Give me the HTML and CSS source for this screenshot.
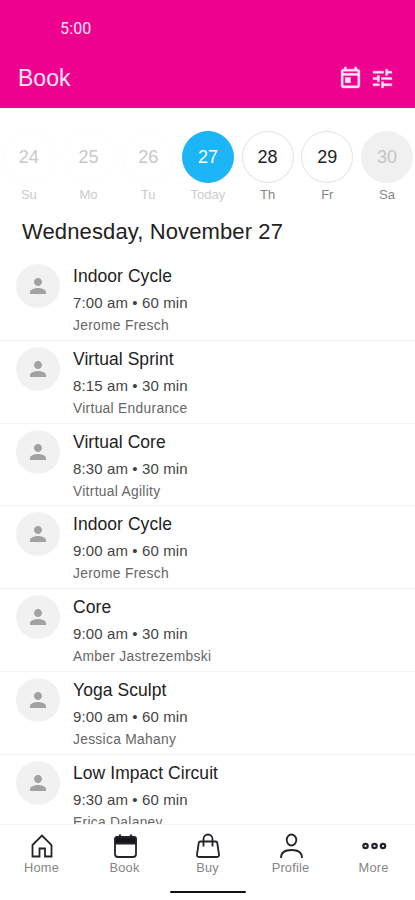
FILE: index.html
```html
<!doctype html>
<html lang="en">
<head>
  <meta charset="utf-8">
  <title>Book</title>
  <link rel="stylesheet" href="styles.css">
</head>
<body>
  <svg class="defs" width="0" height="0">
    <symbol id="person" viewBox="0 0 24 24">
      <path d="M12 12c2.21 0 4-1.79 4-4s-1.79-4-4-4-4 1.79-4 4 1.79 4 4 4zm0 2c-2.67 0-8 1.34-8 4v2h16v-2c0-2.66-5.33-4-8-4z"/>
    </symbol>
  </svg>

  <header class="header">
    <div class="clock">5:00</div>
    <div class="toolbar">
      <h1>Book</h1>
      <svg class="tool" viewBox="0 0 24 24"><path d="M19 3h-1V1h-2v2H8V1H6v2H5c-1.11 0-2 .9-2 2v14c0 1.1.89 2 2 2h14c1.1 0 2-.9 2-2V5c0-1.1-.9-2-2-2zm0 16H5V9h14v10zM5 7V5h14v2H5zm2 4h5v5H7z"/></svg>
      <svg class="tool" viewBox="0 0 24 24"><path d="M3 17v2h6v-2H3zM3 5v2h10V5H3zm10 16v-2h8v-2h-8v-2h-2v6h2zM7 9v2H3v2h4v2h2V9H7zm14 4v-2H11v2h10zm-6-4h2V7h4V5h-4V3h-2v6z"/></svg>
    </div>
  </header>

  <div class="days">
    <div class="day past"><span class="num">24</span><span class="name">Su</span></div>
    <div class="day past"><span class="num">25</span><span class="name">Mo</span></div>
    <div class="day past"><span class="num">26</span><span class="name">Tu</span></div>
    <div class="day today"><span class="num">27</span><span class="name">Today</span></div>
    <div class="day"><span class="num">28</span><span class="name">Th</span></div>
    <div class="day"><span class="num">29</span><span class="name">Fr</span></div>
    <div class="day closed"><span class="num">30</span><span class="name">Sa</span></div>
  </div>

  <h2>Wednesday, November 27</h2>

  <main class="list">
    <div class="row">
      <div class="avatar"><svg viewBox="0 0 24 24"><use href="#person"/></svg></div>
      <div class="info"><h3>Indoor Cycle</h3><p class="time">7:00 am • 60 min</p><p class="who">Jerome Fresch</p></div>
    </div>
    <div class="row">
      <div class="avatar"><svg viewBox="0 0 24 24"><use href="#person"/></svg></div>
      <div class="info"><h3>Virtual Sprint</h3><p class="time">8:15 am • 30 min</p><p class="who">Virtual Endurance</p></div>
    </div>
    <div class="row">
      <div class="avatar"><svg viewBox="0 0 24 24"><use href="#person"/></svg></div>
      <div class="info"><h3>Virtual Core</h3><p class="time">8:30 am • 30 min</p><p class="who">Vitrtual Agility</p></div>
    </div>
    <div class="row">
      <div class="avatar"><svg viewBox="0 0 24 24"><use href="#person"/></svg></div>
      <div class="info"><h3>Indoor Cycle</h3><p class="time">9:00 am • 60 min</p><p class="who">Jerome Fresch</p></div>
    </div>
    <div class="row">
      <div class="avatar"><svg viewBox="0 0 24 24"><use href="#person"/></svg></div>
      <div class="info"><h3>Core</h3><p class="time">9:00 am • 30 min</p><p class="who">Amber Jastrezembski</p></div>
    </div>
    <div class="row">
      <div class="avatar"><svg viewBox="0 0 24 24"><use href="#person"/></svg></div>
      <div class="info"><h3>Yoga Sculpt</h3><p class="time">9:00 am • 60 min</p><p class="who">Jessica Mahany</p></div>
    </div>
    <div class="row">
      <div class="avatar"><svg viewBox="0 0 24 24"><use href="#person"/></svg></div>
      <div class="info"><h3>Low Impact Circuit</h3><p class="time">9:30 am • 60 min</p><p class="who">Erica Dalaney</p></div>
    </div>
  </main>

  <nav class="tabs">
    <a class="tab">
      <svg viewBox="0 0 26 26"><path d="M3.5 12 13 2.5l9.5 9.5v11.500H16v-8h-5.500v8h-7z"/></svg>
      <span>Home</span>
    </a>
    <a class="tab">
      <svg viewBox="0 0 26 26"><rect x="3" y="4" width="21" height="20" rx="3"/><path class="solid" d="M3 10.500V6a2 2 0 0 1 2-2h17a2 2 0 0 1 2 2v4.500z"/><path class="thick" d="M8 1.500V5M19 1.500V5"/></svg>
      <span>Book</span>
    </a>
    <a class="tab">
      <svg viewBox="0 0 26 26"><path d="M5.500 8.500h15.500q1 0 1.200 1L24 21.500q.3 2.500-2.500 2.500h-17Q1.700 24 2 21.500l1.800-12q.2-1 1.700-1zM8.500 13.500V6a4.500 4.500 0 0 1 9 0v7.500"/></svg>
      <span>Buy</span>
    </a>
    <a class="tab">
      <svg viewBox="0 0 26 26"><ellipse cx="13.500" cy="7" rx="4.800" ry="5.500"/><path d="M3 25c0-5.500 3.500-8 10.500-8s10.500 2.500 10.500 8"/></svg>
      <span>Profile</span>
    </a>
    <a class="tab">
      <svg viewBox="0 0 26 26"><circle class="thick" cx="4.500" cy="13" r="2.200"/><circle class="thick" cx="13.500" cy="13" r="2.200"/><circle class="thick" cx="22" cy="13" r="2.200"/></svg>
      <span>More</span>
    </a>
  </nav>
  <div class="homebar"></div>
</body>
</html>
```
FILE: styles.css
```css
*{
  box-sizing: border-box;
}
body{
  margin: 0;
  height: 900px;
  display: flex;
  flex-direction: column;
  overflow: hidden;
  background: #fff;
  color: #222;
  font-family: "Liberation Sans", Arial, sans-serif;
}
h1, h2, h3, p{
  margin: 0;
  font-weight: normal;
}
.defs{
  display: none;
}
.header{
  height: 108px;
  flex: none;
  padding-top: 19px;
  background: #ef018f;
  color: #ffe6f5;
}
.clock{
  padding-left: 60px;
  font: 16px/20px Roboto, sans-serif;
  letter-spacing: 0.15px;
}
.toolbar{
  display: flex;
  align-items: center;
  height: 30px;
  margin-top: 24px;
  padding: 0 20px 0 18px;
}
.toolbar h1{
  flex: 1;
  font-size: 23px;
}
.tool{
  width: 25px;
  height: 25px;
  margin-left: 7px;
  fill: #ffe6f5;
  stroke: #ffe6f5;
  stroke-width: 0.4;
}
.days{
  display: flex;
  flex: none;
  height: 108px;
  padding-top: 23px;
  margin-left: -1px;
}
.day{
  flex: 0 0 59.7px;
  display: flex;
  flex-direction: column;
  align-items: center;
}
.num{
  width: 52px;
  height: 52px;
  border: 1px solid #e2e2e2;
  border-radius: 50%;
  text-align: center;
  font-size: 18px;
  line-height: 51px;
}
.name{
  margin-top: 4px;
  color: #888;
  font-size: 13px;
  line-height: 16px;
}
.past .num{
  border-color: #fdfdfd;
  color: #c8c8c8;
}
.past .name, .today .name{
  color: #ccc;
}
.today .num{
  border-color: #1cb5f5;
  background: #1cb5f5;
  color: #fff;
}
.closed .num{
  border-color: #f0f0f0;
  background: #f0f0f0;
  color: #c4c4c4;
}
h2{
  flex: none;
  height: 42px;
  padding-left: 22px;
  font-size: 22px;
  line-height: 32px;
  letter-spacing: 0.12px;
}
.list{
  flex: 1;
  min-height: 0;
  overflow: hidden;
}
.row{
  display: flex;
  height: 82.75px;
  padding: 6px 16px 0;
  border-bottom: 1px solid #f3f3f3;
}
.avatar{
  width: 44px;
  height: 44px;
  margin-right: 13px;
  padding: 10px;
  border-radius: 50%;
  background: #f1f1f1;
}
.avatar svg{
  display: block;
  width: 24px;
  height: 24px;
  fill: #a2a2a2;
}
h3{
  font-size: 17.5px;
  line-height: 25px;
  letter-spacing: 0.06px;
}
.time{
  color: #444;
  font-size: 15px;
  line-height: 28px;
  letter-spacing: 0.12px;
}
.who{
  color: #666;
  font-size: 13.8px;
  line-height: 17px;
  letter-spacing: 0.3px;
}
.tabs{
  flex: none;
  display: flex;
  height: 67px;
  padding-top: 8px;
  border-top: 1px solid #f3f3f3;
  background: #fff;
}
.tab{
  flex: 1;
  display: flex;
  flex-direction: column;
  align-items: center;
  color: #858585;
  font-size: 12.8px;
  line-height: 16px;
  letter-spacing: 0.2px;
}
.tab svg{
  width: 26px;
  height: 26px;
  margin-bottom: 1px;
  fill: none;
  stroke: #23232b;
  stroke-width: 1.8;
}
.tab .solid{
  fill: #15151a;
}
.tab .thick{
  stroke-width: 2.2;
}
.homebar{
  flex: none;
  width: 76px;
  height: 2px;
  margin: 0 auto 7px;
  border-radius: 1px;
  background: #111;
}
```
